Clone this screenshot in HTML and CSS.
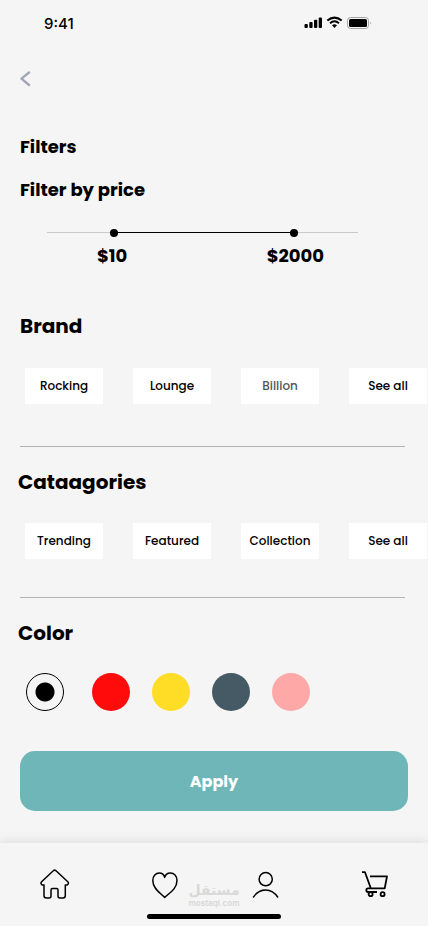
FILE: index.html
```html
<!DOCTYPE html>
<html lang="en">
<head>
<meta charset="utf-8">
<meta name="viewport" content="width=device-width, initial-scale=1">
<title>Filters</title>
<link rel="stylesheet" href="styles.css">
</head>
<body>
<div class="screen">
  <header class="status">
    <time class="clock">9:41</time>
    <svg class="signals" viewBox="0 0 68 14" width="68" height="14" aria-hidden="true">
      <rect x="0.500" y="8" width="3.300" height="4" rx="1"/>
      <rect x="5.300" y="6" width="3.300" height="6" rx="1"/>
      <rect x="10" y="3.800" width="3.300" height="8.200" rx="1"/>
      <rect x="14.700" y="1.500" width="3.300" height="10.500" rx="1"/>
      <path d="M23.300 4.600Q30.500 -1.400 37.700 4.600M26 7.200Q30.500 3.400 35 7.200" fill="none" stroke="#000" stroke-width="2"/>
      <path d="M28 9.300Q30.500 7.300 33 9.300L30.500 12Z"/>
      <rect x="43.500" y="1.500" width="21" height="11" rx="3" fill="none" stroke="#a5a5a5"/>
      <rect x="45" y="3" width="18" height="8" rx="1.500"/>
      <path d="M66 5.500Q67.700 7 66 8.500Z" fill="#999"/>
    </svg>
  </header>

  <main class="content">
    <a class="back" href="#" aria-label="Back">
      <svg viewBox="0 0 12 16" width="12" height="16"><path d="M9 1.500L1.500 7.700L9 14" fill="none" stroke="#a3a7b5" stroke-width="2.400" stroke-linecap="round" stroke-linejoin="round"/></svg>
    </a>
    <h1 class="title">Filters</h1>

    <section class="price">
      <h2 class="title">Filter by price</h2>
      <div class="slider">
        <div class="track"></div>
        <input type="range" min="0" max="1000" value="208" aria-label="Minimum price" aria-valuetext="$10">
        <input type="range" min="0" max="1000" value="802" aria-label="Maximum price" aria-valuetext="$2000">
      </div>
      <div class="amounts"><output>$10</output><output>$2000</output></div>
    </section>

    <section class="group">
      <h2 class="heading">Brand</h2>
      <div class="chips">
        <button type="button">Rocking</button>
        <button type="button">Lounge</button>
        <button type="button" class="muted">Billion</button>
        <button type="button">See all</button>
      </div>
    </section>

    <section class="group categories">
      <h2 class="heading">Cataagories</h2>
      <div class="chips">
        <button type="button">Trending</button>
        <button type="button">Featured</button>
        <button type="button">Collection</button>
        <button type="button">See all</button>
      </div>
    </section>

    <section class="colors">
      <h2 class="heading">Color</h2>
      <div class="swatches">
        <input class="black" type="radio" name="color" aria-label="Black" checked>
        <input class="red" type="radio" name="color" aria-label="Red">
        <input class="yellow" type="radio" name="color" aria-label="Yellow">
        <input class="slate" type="radio" name="color" aria-label="Slate">
        <input class="pink" type="radio" name="color" aria-label="Pink">
      </div>
    </section>

    <button class="apply" type="button">Apply</button>
  </main>

  <nav class="tabs">
    <div class="pair">
      <a href="#" aria-label="Home"><svg viewBox="0 0 30 30" width="30" height="30"><path d="M13.300 1.800L1.600 12.700Q.2 14.600 2 15.900H4V26.500Q4 29 6.500 29H9Q11 29 11 27V21Q11 19.500 12.500 19.500H16.500Q18 19.500 18 21V27Q18 29 20 29H23Q25.300 29 25.300 26.500V15.900H27.300Q29.300 14.600 27.800 12.700L16 1.800Q14.600 .5 13.300 1.800Z"/></svg></a>
      <a href="#" aria-label="Favourites"><svg viewBox="0 0 27 30" width="27" height="30"><path d="M12.700 28.500C9.500 24.800 0.800 20.500 0.800 11.500C0.800 7 3.800 4 7.300 4C10 4 12 5.500 12.700 8.400C13.400 5.500 15.600 4 18.400 4C22 4 25 7 25 11.500C25 20.500 16 24.800 12.700 28.500Z"/></svg></a>
    </div>
    <div class="watermark"><span lang="ar" dir="rtl">مستقل</span><small>mostaql.com</small></div>
    <div class="pair">
      <a href="#" aria-label="Profile"><svg viewBox="0 0 27 30" width="27" height="30"><circle cx="13.700" cy="10.200" r="6.600"/><path d="M1.200 28.500C7.500 18.500 19.500 18.500 26 28.500"/></svg></a>
      <a href="#" aria-label="Cart"><svg class="cart" viewBox="0 0 27 30" width="27" height="30"><path d="M1 3.200H4L9.800 19.300H23.700L26 7.300H9M9.800 19.300H7C4.800 19.300 4.800 23 7 23H16"/><circle cx="9.600" cy="25.200" r="2"/><circle cx="21.600" cy="25.200" r="2"/></svg></a>
    </div>
    <div class="home-bar"></div>
  </nav>
</div>
</body>
</html>
```

FILE: styles.css
```css
* { box-sizing: border-box; }

body {
  margin: 0;
  background: #f5f5f5;
  color: #000;
  font-family: Poppins, Inter, "Liberation Sans", sans-serif;
}

h1, h2 { margin: 0; font-weight: 700; }

button { border: 0; font-family: inherit; cursor: pointer; }

svg { display: block; }

.screen {
  display: flex;
  flex-direction: column;
  min-height: 100vh;
}

.status {
  display: flex;
  align-items: center;
  justify-content: space-between;
  height: 46px;
  padding: 0 56px 0 44px;
}

.clock {
  font-family: Inter, sans-serif;
  font-size: 15px;
  font-weight: 500;
}

.content {
  display: flex;
  flex-direction: column;
  flex: 1;
  padding: 24px 20px 32px;
}

.back { align-self: flex-start; padding: 1px 0; }

.title { font-size: 18px; line-height: 28px; }

h1.title { margin-top: 45px; }

.price { margin-top: 15px; }

.slider {
  position: relative;
  height: 16px;
  margin: 21px 50px 0 27px;
}

.track {
  position: absolute;
  top: 7px;
  left: 0;
  width: 100%;
  height: 1px;
  background: linear-gradient(90deg, #c9c9c9 21%, #000 21% 80%, #c9c9c9 80%);
}

.slider input {
  position: absolute;
  top: 0;
  left: 0;
  width: 100%;
  height: 16px;
  margin: 0;
  appearance: none;
  background: none;
  pointer-events: none;
}

.slider input::-webkit-slider-thumb {
  appearance: none;
  width: 8px;
  height: 8px;
  border-radius: 50%;
  background: #000;
  pointer-events: auto;
}

.amounts {
  display: flex;
  justify-content: space-between;
  margin: 2px 84px 0 77px;
  font-size: 18px;
  font-weight: 700;
  line-height: 26px;
}

.heading { font-size: 20px; line-height: 30px; }

.group {
  padding-bottom: 42px;
  margin: 42px 3px 0 0;
  border-bottom: 1px solid #b2b4b3;
}

.group.categories { margin-top: 20px; padding-bottom: 38px; }

.categories .heading, .colors .heading { margin-left: -2px; }

.chips {
  display: grid;
  grid-template-columns: repeat(4, 1fr);
  gap: 30px;
  margin: 27px -22px 0 5px;
}

.categories .chips { margin-top: 26px; }

.chips button {
  height: 36px;
  padding: 0;
  background: #fff;
  color: #000;
  font-size: 12px;
  font-weight: 500;
}

.chips .muted { color: #555; }

.colors { margin-top: 20px; }

.swatches {
  display: flex;
  gap: 22px;
  margin: 25px 0 0 6px;
}

.swatches input {
  appearance: none;
  width: 38px;
  height: 38px;
  margin: 0;
  border-radius: 50%;
}

.swatches .black {
  margin-right: 6px;
  border: 1px solid #000;
  background: radial-gradient(circle, #000 9px, transparent 10px);
}

.red { background: #ff0b0b; }
.yellow { background: #ffdc25; }
.slate { background: #455a64; }
.pink { background: #ffa8a8; }

.apply {
  height: 60px;
  margin-top: 40px;
  border-radius: 15px;
  background: #6fb6b8;
  color: #fff;
  font-size: 16px;
  font-weight: 700;
}

.tabs {
  position: relative;
  display: flex;
  justify-content: space-between;
  height: 83px;
  padding: 26px 40px 0;
  background: #f5f5f5;
  box-shadow: 0 0 12px rgba(0, 0, 0, .13);
}

.pair { display: flex; gap: 82px; }

.tabs svg { fill: none; stroke: #000; stroke-width: 1.500; stroke-linejoin: round; }

.tabs .cart { stroke-width: 1.800; }

.watermark {
  position: absolute;
  top: 38px;
  left: 50%;
  display: flex;
  flex-direction: column;
  align-items: center;
  margin-left: -26px;
  width: 52px;
  color: #d9d9d9;
  font-family: "DejaVu Sans", sans-serif;
  font-size: 14px;
  font-weight: 700;
  line-height: 18px;
}

.watermark small {
  font-family: Inter, sans-serif;
  font-size: 8px;
  line-height: 8px;
}

.home-bar {
  position: absolute;
  bottom: 7px;
  left: 50%;
  width: 134px;
  height: 5px;
  margin-left: -67px;
  border-radius: 3px;
  background: #000;
}
```
